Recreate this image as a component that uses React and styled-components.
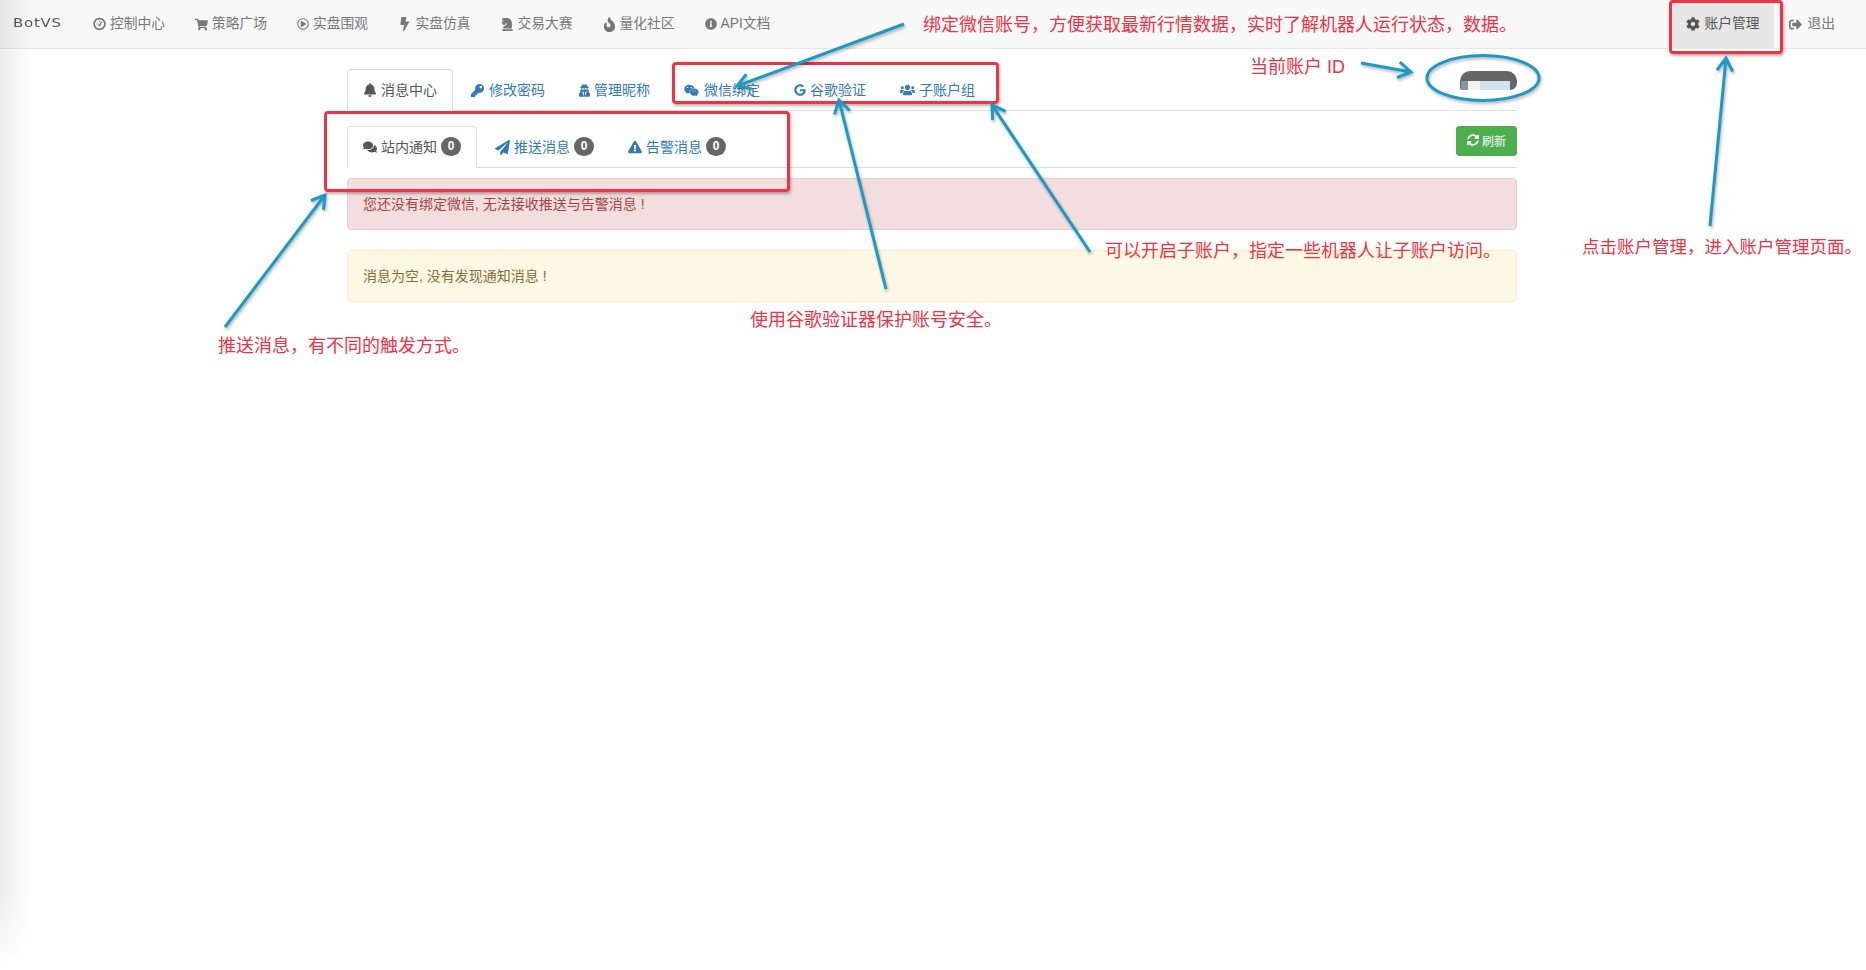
import React from "react";
import styled, { createGlobalStyle } from "styled-components";
import {
  FaShoppingCart, FaRegPlayCircle, FaBolt, FaChessKnight, FaFire, FaInfoCircle, FaCog, FaSignOutAlt,
  FaBell, FaKey, FaUserSecret, FaWeixin, FaGoogle, FaUsers, FaComments, FaPaperPlane,
  FaExclamationTriangle, FaSyncAlt,
} from "react-icons/fa";

const GlobalStyle = createGlobalStyle`
  html, body { margin: 0; padding: 0; background: #fff; }
  body {
    font-family: "Liberation Sans", "Noto Sans CJK SC", sans-serif;
    font-size: 14px;
    line-height: 20px;
    color: #333;
    overflow: hidden;
  }
`;

const GaugeIcon = () => (
  <svg width="14" height="14" viewBox="0 0 14 14" fill="none" stroke="currentColor">
    <circle cx="7" cy="7" r="5.8" strokeWidth="1.8" />
    <path d="M7 8 9.6 4.4" strokeWidth="1.4" />
    <circle cx="7" cy="8.2" r="1.2" fill="currentColor" stroke="none" />
    <path d="M3.6 7h1M7 3.4v1" strokeWidth="1" />
  </svg>
);

const navItems = [
  { icon: <GaugeIcon />, w: 13, s: 14, text: "控制中心" },
  { icon: <FaShoppingCart />, w: 13, s: 13, text: "策略广场" },
  { icon: <FaRegPlayCircle />, w: 12, s: 14, text: "实盘围观" },
  { icon: <FaBolt />, w: 13.5, s: 14, text: "实盘仿真" },
  { icon: <FaChessKnight />, w: 13, s: 14, text: "交易大赛" },
  { icon: <FaFire />, w: 13, s: 15, text: "量化社区" },
  { icon: <FaInfoCircle />, w: 12, s: 14, text: "API文档" },
];

const mainTabs = [
  { icon: <FaBell />, w: 14, s: 14, text: "消息中心", active: true },
  { icon: <FaKey />, w: 14, s: 13, text: "修改密码" },
  { icon: <FaUserSecret />, w: 11, s: 13, text: "管理昵称" },
  { icon: <FaWeixin />, w: 16, s: 15, text: "微信绑定" },
  { icon: <FaGoogle />, w: 12, s: 12, text: "谷歌验证" },
  { icon: <FaUsers />, w: 15, s: 16, text: "子账户组" },
];

const subTabs = [
  { icon: <FaComments />, w: 14, s: 14, text: "站内通知", active: true },
  { icon: <FaPaperPlane />, w: 15, s: 15, text: "推送消息" },
  { icon: <FaExclamationTriangle />, w: 14, s: 14, text: "告警消息" },
];

const labels = [
  { x: 923, y: 25, s: 18, text: "绑定微信账号，方便获取最新行情数据，实时了解机器人运行状态，数据。" },
  { x: 1250, y: 67, s: 18, text: "当前账户 ID" },
  { x: 218, y: 346, s: 18, text: "推送消息，有不同的触发方式。" },
  { x: 750, y: 320, s: 18, text: "使用谷歌验证器保护账号安全。" },
  { x: 1105, y: 251, s: 18, text: "可以开启子账户，指定一些机器人让子账户访问。" },
  { x: 1582, y: 247, s: 17.5, text: "点击账户管理，进入账户管理页面。" },
];

const callouts = [
  { x: 672, y: 62, w: 327, h: 42 },
  { x: 324, y: 111, w: 466, h: 81 },
  { x: 1669, y: 0, w: 114, h: 54 },
];

const arrows = [
  [904, 24, 737, 86],
  [886, 289, 839, 100],
  [1090, 252, 992, 105],
  [225, 327, 325, 195],
  [1710, 226, 1726, 58],
  [1361, 63, 1411, 72],
];

// open arrow head, two legs folded back from the tip
const arrowPath = ([x1, y1, x2, y2]) => {
  const angle = Math.atan2(y1 - y2, x1 - x2);
  const leg = (d) => {
    const a = angle + d;
    return `${(x2 + 15 * Math.cos(a)).toFixed(1)} ${(y2 + 15 * Math.sin(a)).toFixed(1)}`;
  };
  return `M${x1} ${y1}L${x2} ${y2}M${leg(0.55)}L${x2} ${y2}L${leg(-0.55)}`;
};

const App = () => (
  <Page>
    <GlobalStyle />
    <EdgeShade />
    <Navbar>
      <BrandBox>
        <Brand>BotVS</Brand>
      </BrandBox>
      {navItems.map((item) => (
        <NavItem key={item.text}>
          <IconSlot $w={item.w} $s={item.s}>{item.icon}</IconSlot>
          {item.text}
        </NavItem>
      ))}
      <NavRight>
        <NavItem $active>
          <IconSlot $w={14} $s={14}><FaCog /></IconSlot>
          账户管理
        </NavItem>
        <NavItem>
          <IconSlot $w={14} $s={13}><FaSignOutAlt /></IconSlot>
          退出
        </NavItem>
      </NavRight>
    </Navbar>

    <Container>
      <TabRow>
        {mainTabs.map((tab) => (
          <Tab key={tab.text} $active={tab.active}>
            <IconSlot $w={tab.w} $s={tab.s}>{tab.icon}</IconSlot>
            {tab.text}
          </Tab>
        ))}
        <AccountId>
          <AccountIdTop />
          <AccountIdBlur>
            <BlurPart $w={7} $c="#8096ad" />
            <BlurPart $w={12} $c="#f0f3e6" />
            <BlurPart $w={30} $c="#cfe3f0" />
          </AccountIdBlur>
        </AccountId>
      </TabRow>

      <SubTabRow>
        {subTabs.map((tab) => (
          <Tab key={tab.text} $active={tab.active}>
            <IconSlot $w={tab.w} $s={tab.s}>{tab.icon}</IconSlot>
            {tab.text}
            <Badge>0</Badge>
          </Tab>
        ))}
        <RefreshButton>
          <FaSyncAlt />
          刷新
        </RefreshButton>
      </SubTabRow>

      <Alert $kind="danger">您还没有绑定微信, 无法接收推送与告警消息 !</Alert>
      <Alert $kind="warning">消息为空, 没有发现通知消息 !</Alert>
    </Container>

    {callouts.map((c) => (
      <Callout key={c.x} $x={c.x} $y={c.y} $w={c.w} $h={c.h} />
    ))}
    <ArrowLayer width="1866" height="970" viewBox="0 0 1866 970" fill="none">
      <ellipse cx="1483" cy="78" rx="56" ry="22.5" stroke="#1c9ac5" strokeWidth="3" />
      {arrows.map((a) => (
        <path key={a.join()} d={arrowPath(a)} stroke="#1c9ac5" strokeWidth="3" />
      ))}
    </ArrowLayer>
    {labels.map((l) => (
      <Label key={l.text} $x={l.x} $y={l.y} $s={l.s}>{l.text}</Label>
    ))}
  </Page>
);

export default App;

const Page = styled.div`
  position: relative;
  width: 1866px;
  height: 970px;
  overflow: hidden;
`;

const EdgeShade = styled.div`
  position: absolute;
  left: 0;
  top: 0;
  bottom: 0;
  width: 34px;
  background: linear-gradient(to right, rgba(0, 0, 0, 0.07), rgba(0, 0, 0, 0));
  -webkit-mask-image: linear-gradient(to bottom, #000 92%, transparent);
  pointer-events: none;
`;

const Navbar = styled.nav`
  display: flex;
  height: 48px;
  padding-right: 16px;
  background: #f8f8f8;
  border-bottom: 1px solid #e7e7e7;
`;

const BrandBox = styled.div`
  width: 65px;
  padding-left: 13px;
`;

const Brand = styled.div`
  font-family: "DejaVu Sans", sans-serif;
  font-size: 11.5px;
  letter-spacing: 0.6px;
  line-height: 47px;
  color: #555;
  transform: scaleX(1.3);
  transform-origin: left center;
`;

const NavItem = styled.a`
  display: flex;
  align-items: center;
  padding: 0 15px;
  font-size: 13.75px;
  color: ${(p) => (p.$active ? "#555" : "#777")};
  background: ${(p) => (p.$active ? "#e7e7e7" : "transparent")};
`;

const NavRight = styled.div`
  display: flex;
  margin-left: auto;
`;

const IconSlot = styled.span`
  display: inline-flex;
  justify-content: flex-start;
  align-items: center;
  flex: none;
  width: ${(p) => p.$w}px;
  margin-right: 4px;
  font-size: ${(p) => p.$s}px;
`;

const Container = styled.main`
  width: 1170px;
  margin: 20px 0 0 347px;
`;

const TabRow = styled.div`
  display: flex;
  height: 41px;
  border-bottom: 1px solid #ddd;
`;

const SubTabRow = styled(TabRow)`
  margin-top: 15px;
  margin-bottom: 10px;
`;

const Tab = styled.a`
  display: flex;
  align-items: center;
  height: 42px;
  box-sizing: border-box;
  margin-right: 2px;
  padding: 0 15px;
  border: 1px solid ${(p) => (p.$active ? "#ddd" : "transparent")};
  border-bottom-color: ${(p) => (p.$active ? "#fff" : "transparent")};
  border-radius: 4px 4px 0 0;
  background: ${(p) => (p.$active ? "#fff" : "transparent")};
  color: ${(p) => (p.$active ? "#555" : "#337ab7")};
`;

const Badge = styled.span`
  width: 20px;
  height: 19px;
  margin: 0 0 2px 4px;
  border-radius: 10px;
  background: #666;
  color: #fff;
  font-size: 12px;
  font-weight: 700;
  line-height: 19px;
  text-align: center;
`;

const AccountId = styled.div`
  display: flex;
  flex-direction: column;
  width: 57px;
  height: 19px;
  margin: 2px 0 0 auto;
  border-radius: 10px 10px 7px 2px;
  background: #666;
  overflow: hidden;
`;

const AccountIdTop = styled.div`
  height: 10px;
`;

const AccountIdBlur = styled.div`
  display: flex;
  height: 9px;
  padding-left: 1px;
`;

const BlurPart = styled.span`
  width: ${(p) => p.$w}px;
  background: ${(p) => p.$c};
`;

const RefreshButton = styled.button`
  display: flex;
  align-items: center;
  justify-content: center;
  gap: 3px;
  width: 61px;
  height: 30px;
  margin-left: auto;
  padding: 0 0 2px;
  border: 1px solid #4cae4c;
  border-radius: 3px;
  background: #4cae4c;
  color: #fff;
  font-family: inherit;
  font-size: 12px;
`;

const alertColors = {
  danger: { bg: "#f2dede", border: "#ebccd1", text: "#a94442" },
  warning: { bg: "#fcf8e3", border: "#faebcc", text: "#8a6d3b" },
};

const Alert = styled.div`
  box-sizing: border-box;
  height: 52px;
  margin-bottom: 20px;
  padding: 15px;
  border: 1px solid ${(p) => alertColors[p.$kind].border};
  border-radius: 4px;
  background: ${(p) => alertColors[p.$kind].bg};
  color: ${(p) => alertColors[p.$kind].text};
`;

const Callout = styled.div`
  position: absolute;
  left: ${(p) => p.$x}px;
  top: ${(p) => p.$y}px;
  width: ${(p) => p.$w}px;
  height: ${(p) => p.$h}px;
  box-sizing: border-box;
  border: 3px solid #ee3344;
  border-radius: 4px;
  box-shadow: 1px 2px 3px rgba(0, 0, 0, 0.3);
  pointer-events: none;
`;

const ArrowLayer = styled.svg`
  position: absolute;
  left: 0;
  top: 0;
  filter: drop-shadow(1px 2px 1.5px rgba(0, 0, 0, 0.3));
  pointer-events: none;
`;

const Label = styled.div`
  position: absolute;
  left: ${(p) => p.$x}px;
  top: ${(p) => p.$y - 12}px;
  font-size: ${(p) => p.$s}px;
  line-height: 24px;
  color: #ee3344;
  white-space: nowrap;
`;
